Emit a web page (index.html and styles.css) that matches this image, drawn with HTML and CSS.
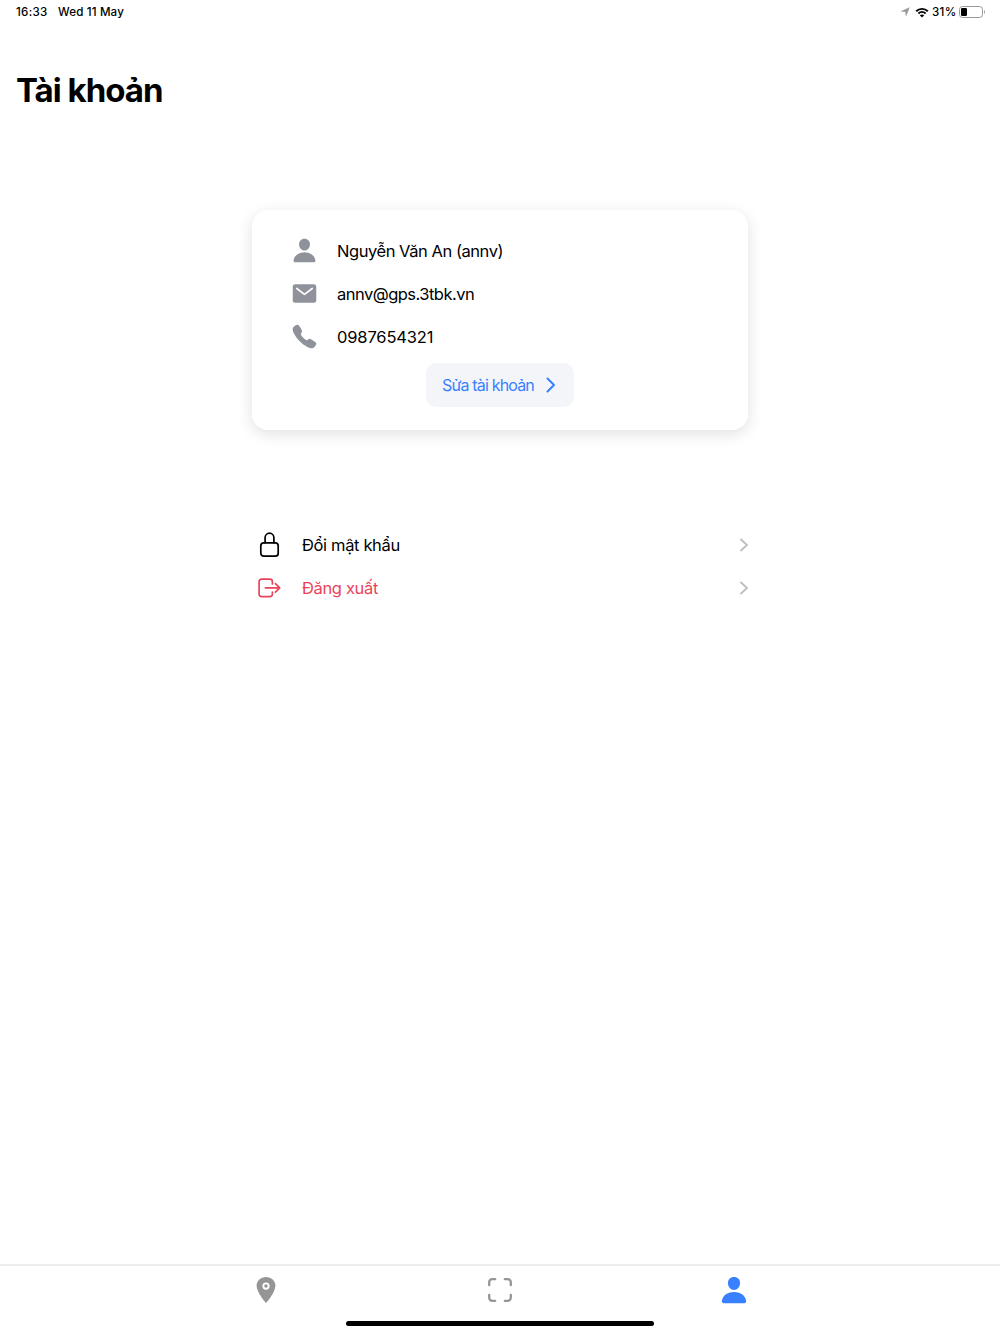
FILE: index.html
```html
<!DOCTYPE html>
<html lang="vi">
<head>
    <meta charset="UTF-8">
    <meta name="viewport" content="width=device-width, initial-scale=1.0">
    <title>Tài khoản</title>
    <link rel="stylesheet" href="styles.css">
</head>
<body>
    <div class="status-bar">
        <span class="time">16:33</span>
        <span class="date">Wed 11 May</span>
        <div class="status-icons">
            <svg class="arrow" viewBox="0 0 10 10"><path d="M9.7.3L6 9.7 5.2 4.8.3 4.5z"/></svg>
            <svg class="wifi" viewBox="0 0 14 11">
                <path d="M1.2 4.3C4.5 1.1 9.5 1.1 12.8 4.3M3.4 6.5C5.5 4.6 8.5 4.6 10.6 6.5"/>
                <path class="wifi-dot" d="M4.8 8.2C6.2 7.1 7.8 7.1 9.2 8.2L7 10.5z"/>
            </svg>
            <span class="percent">31%</span>
            <svg class="battery" viewBox="0 0 26 12">
                <rect class="battery-case" x="0.5" y="0.5" width="23" height="11" rx="3"/>
                <rect x="2" y="2" width="6" height="8" rx="1.3"/>
                <path class="battery-tip" d="M25 4c1.2.6 1.2 3.4 0 4z"/>
            </svg>
        </div>
    </div>

    <h1>Tài khoản</h1>

    <main>
        <div class="card">
            <div class="info">
                <svg class="info-icon" viewBox="0 0 512 512"><path d="M332.64 64.58C313.18 43.57 286 32 256 32c-30.16 0-57.43 11.5-76.8 32.38-19.58 21.11-29.12 49.8-26.88 80.78C156.76 206.28 203.27 256 256 256s99.16-49.71 103.67-110.82c2.27-30.7-7.33-59.33-27.03-80.6zM432 480H80a31 31 0 01-24.2-11.13c-6.5-7.77-9.12-18.38-7.18-29.11C57.06 392.94 83.4 353.61 124.8 326c36.78-24.51 83.37-38 131.2-38s94.42 13.5 131.2 38c41.4 27.6 67.74 66.93 76.18 113.75 1.94 10.73-.68 21.34-7.18 29.11A31 31 0 01432 480z"/></svg>
                <span class="name">Nguyễn Văn An (annv)</span>
            </div>
            <div class="info">
                <svg class="info-icon" viewBox="0 0 28 28">
                    <rect x="1.8" y="4.4" width="24.4" height="19.2" rx="2.6"/>
                    <path class="flap" d="M6 8.8l8 6.2 8-6.2"/>
                </svg>
                <span class="email">annv@gps.3tbk.vn</span>
            </div>
            <div class="info">
                <svg class="info-icon" viewBox="0 0 512 512"><path d="M391 480c-19.52 0-46.94-7.06-88-30-49.93-28-88.55-53.85-138.21-103.38C116.91 298.77 93.61 267.79 61 208.45c-36.84-67-30.56-102.12-23.54-117.13C45.82 73.38 58.16 62.65 74.11 52a176.3 176.3 0 0128.64-15.2c1-.43 1.93-.84 2.76-1.21 4.95-2.23 12.45-5.6 21.95-2 6.34 2.38 12 7.25 20.86 16 18.17 17.92 43 57.83 52.16 77.43 6.15 13.21 10.22 21.93 10.23 31.71 0 11.45-5.76 20.28-12.75 29.81-1.31 1.79-2.61 3.5-3.87 5.16-7.61 10-9.28 12.89-8.18 18.05 2.23 10.37 18.86 41.24 46.19 68.51s57.31 42.85 67.72 45.07c5.38 1.15 8.33-.59 18.65-8.47 1.48-1.13 3-2.3 4.59-3.47 10.66-7.93 19.08-13.54 30.26-13.54h.06c9.73 0 18.06 4.22 31.86 11.18 18 9.08 59.11 33.59 77.14 51.78 8.77 8.84 13.66 14.48 16.05 20.81 3.6 9.53.21 17-2 22-.37.83-.78 1.74-1.21 2.75a176.49 176.49 0 01-15.29 28.58c-10.63 15.9-21.4 28.21-39.38 36.58A67.42 67.42 0 01391 480z"/></svg>
                <span class="phone">0987654321</span>
            </div>
            <button class="edit">
                <span>Sửa tài khoản</span>
                <svg class="edit-arrow" viewBox="0 0 10 16"><path d="M1.5 1.5L8 8l-6.5 6.5"/></svg>
            </button>
        </div>

        <div class="menu">
            <a class="menu-item">
                <svg class="menu-icon" viewBox="0 0 26 28">
                    <rect x="4.8" y="11.8" width="17.4" height="13.4" rx="3"/>
                    <path d="M9.1 11.8V6.6a4.4 4.4 0 018.8 0v5.2"/>
                </svg>
                <span>Đổi mật khẩu</span>
                <svg class="chevron" viewBox="0 0 9 14"><path d="M1.5 1L8 7l-6.5 6"/></svg>
            </a>
            <a class="menu-item logout">
                <svg class="menu-icon" viewBox="0 0 26 28">
                    <path d="M16.4 10V7.6a2.5 2.5 0 00-2.5-2.5H5.6a2.5 2.5 0 00-2.5 2.5v12.6a2.5 2.5 0 002.5 2.5h8.3a2.5 2.5 0 002.5-2.5V18M9.4 13.9h14M19.4 9.6l4.3 4.3-4.3 4.3"/>
                </svg>
                <span>Đăng xuất</span>
                <svg class="chevron" viewBox="0 0 9 14"><path d="M1.5 1L8 7l-6.5 6"/></svg>
            </a>
        </div>
    </main>

    <nav class="tab-bar">
        <div class="tabs">
            <svg class="tab" viewBox="0 0 512 512">
                <path d="M256 32C167.67 32 96 96.51 96 176c0 128 160 304 160 304s160-176 160-304c0-79.49-71.67-144-160-144z"/>
                <circle class="pin-ring" cx="256" cy="188" r="46"/>
            </svg>
            <svg class="tab scan" viewBox="0 0 30 30"><path d="M19.8 4.2h3a3 3 0 013 3v3M19.8 25.8h3a3 3 0 003-3v-3M10.2 25.8h-3a3 3 0 01-3-3v-3M10.2 4.2h-3a3 3 0 00-3 3v3"/></svg>
            <svg class="tab active" viewBox="0 0 512 512"><path d="M332.64 64.58C313.18 43.57 286 32 256 32c-30.16 0-57.43 11.5-76.8 32.38-19.58 21.11-29.12 49.8-26.88 80.78C156.76 206.28 203.27 256 256 256s99.16-49.71 103.67-110.82c2.27-30.7-7.33-59.33-27.03-80.6zM432 480H80a31 31 0 01-24.2-11.13c-6.5-7.77-9.12-18.38-7.18-29.11C57.06 392.94 83.4 353.61 124.8 326c36.78-24.51 83.37-38 131.2-38s94.42 13.5 131.2 38c41.4 27.6 67.74 66.93 76.18 113.75 1.94 10.73-.68 21.34-7.18 29.11A31 31 0 01432 480z"/></svg>
        </div>
        <div class="home-bar"></div>
    </nav>
</body>
</html>
```
FILE: styles.css
```css
* {
    box-sizing: border-box;
}

body {
    font-family: Inter, sans-serif;
    font-size: 16.5px;
    height: 1334px;
    margin: 0;
    display: flex;
    flex-direction: column;
    background: #fff;
    color: #000;
}

/* Status bar */
.status-bar {
    display: flex;
    align-items: center;
    height: 24px;
    padding: 0 15px 0 16px;
    font-size: 11.6px;
    font-weight: 500;
    white-space: nowrap;
}

.time {
    width: 42px;
    letter-spacing: 0.3px;
}

.date {
    letter-spacing: 0.15px;
}

.status-icons {
    display: flex;
    align-items: center;
    margin-left: auto;
}

.arrow {
    width: 10px;
    height: 10px;
    margin-right: 5px;
    fill: #999;
}

.wifi {
    width: 14px;
    height: 11px;
    margin-right: 3px;
    fill: none;
    stroke: #000;
    stroke-width: 1.9;
}

.wifi-dot {
    fill: #000;
    stroke: none;
}

.percent {
    width: 27px;
    letter-spacing: 0.3px;
}

.battery {
    width: 26px;
    height: 12px;
}

.battery-case {
    fill: none;
    stroke: #999;
}

.battery-tip {
    fill: #999;
}

h1 {
    margin: 46px 0 0 16px;
    font-size: 33px;
    line-height: 40px;
    font-weight: 700;
    letter-spacing: -1px;
}

main {
    width: 496px;
    margin: 100px auto 0;
}

/* User card */
.card {
    display: flex;
    flex-direction: column;
    height: 220px;
    padding: 19px 39px 0;
    border-radius: 16px;
    background: #fff;
    box-shadow: 0 4px 16px rgba(0,0,0,0.12);
}

.info {
    display: flex;
    align-items: center;
    gap: 19px;
    height: 43px;
}

.info-icon {
    width: 27px;
    height: 27px;
    fill: #8f929b;
}

.name {
    letter-spacing: -0.45px;
}

.email {
    letter-spacing: -0.52px;
}

.phone {
    letter-spacing: -0.15px;
}

.flap {
    fill: none;
    stroke: #fff;
    stroke-width: 1.7;
    stroke-linecap: round;
    stroke-linejoin: round;
}

.edit {
    display: flex;
    align-items: center;
    align-self: center;
    justify-content: space-between;
    width: 148px;
    height: 44px;
    margin-top: 5px;
    padding: 0 18px 0 16px;
    border: none;
    border-radius: 10px;
    background: #f3f5f9;
    color: #3880ff;
    font-family: inherit;
    font-size: 16px;
    letter-spacing: -0.83px;
    white-space: nowrap;
    cursor: pointer;
}

.edit-arrow {
    width: 10px;
    height: 16px;
    fill: none;
    stroke: #3880ff;
    stroke-width: 2;
    stroke-linecap: round;
    stroke-linejoin: round;
}

/* Menu */
.menu {
    margin-top: 93px;
}

.menu-item {
    display: flex;
    align-items: center;
    height: 43px;
    padding-left: 4px;
    letter-spacing: -0.35px;
}

.menu-icon {
    width: 26px;
    height: 28px;
    margin-right: 20px;
    fill: none;
    stroke: currentColor;
    stroke-width: 1.7;
    stroke-linecap: round;
    stroke-linejoin: round;
}

.chevron {
    width: 9px;
    height: 14px;
    margin-left: auto;
    fill: none;
    stroke: #bdbdbd;
    stroke-width: 1.9;
}

.logout {
    color: #eb445a;
}

/* Tab bar */
.tab-bar {
    height: 70px;
    margin-top: auto;
    border-top: 2px solid #ededed;
}

.tabs {
    display: flex;
    justify-content: space-between;
    width: 498px;
    height: 55px;
    margin: 0 auto;
    padding-top: 9px;
}

.tab {
    width: 30px;
    height: 30px;
    fill: #959595;
}

.pin-ring {
    fill: none;
    stroke: #fff;
    stroke-width: 32;
}

.scan {
    fill: none;
    stroke: #959595;
    stroke-width: 2.3;
    stroke-linecap: round;
}

.active {
    fill: #3880ff;
}

.home-bar {
    width: 308px;
    height: 5px;
    margin: 0 auto;
    border-radius: 3px;
    background: #000;
}
```
